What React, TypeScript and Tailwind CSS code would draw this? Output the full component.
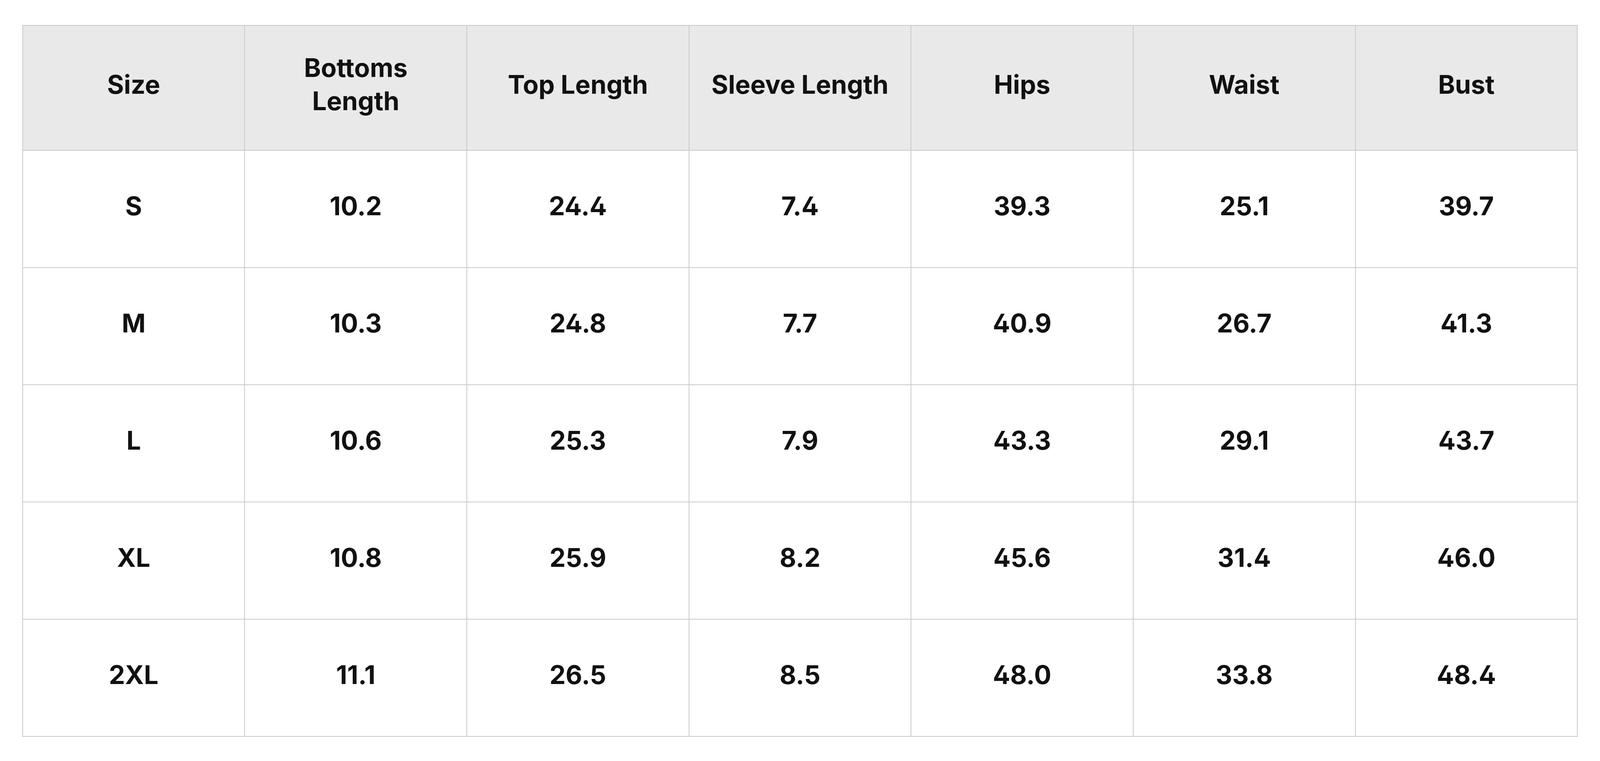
import React from "react";

const headers: React.ReactNode[] = [
  "Size",
  <>
    Bottoms
    <br />
    Length
  </>,
  "Top Length",
  "Sleeve Length",
  "Hips",
  "Waist",
  "Bust",
];

const rows: string[][] = [
  ["S", "10.2", "24.4", "7.4", "39.3", "25.1", "39.7"],
  ["M", "10.3", "24.8", "7.7", "40.9", "26.7", "41.3"],
  ["L", "10.6", "25.3", "7.9", "43.3", "29.1", "43.7"],
  ["XL", "10.8", "25.9", "8.2", "45.6", "31.4", "46.0"],
  ["2XL", "11.1", "26.5", "8.5", "48.0", "33.8", "48.4"],
];

export default function App() {
  return (
    <div className="h-screen w-full overflow-hidden bg-white px-[1.3889vw] py-[3.2854vh] font-['Inter',sans-serif] text-[#111111] [font-feature-settings:'cv02']">
      <div className="grid grid-cols-7 border-l-2 border-t-2 border-[#c9c9c9]">
        {headers.map((h, i) => (
          <div
            key={i}
            className="flex h-[16.427vh] items-center justify-center border-b-2 border-r-2 border-[#c9c9c9] bg-[#e9e9e9] pb-[0.8vh] text-center text-[1.6vw] font-bold leading-[4.36vh]"
          >
            <span>{h}</span>
          </div>
        ))}
        {rows.map((r, ri) =>
          r.map((c, ci) => (
            <div
              key={`${ri}-${ci}`}
              className="flex h-[15.4vh] items-center justify-center border-b-2 border-r-2 border-[#c9c9c9] bg-white pb-[0.7vh] text-center text-[1.6vw] font-bold leading-[4.36vh]"
            >
              {c}
            </div>
          ))
        )}
      </div>
    </div>
  );
}
